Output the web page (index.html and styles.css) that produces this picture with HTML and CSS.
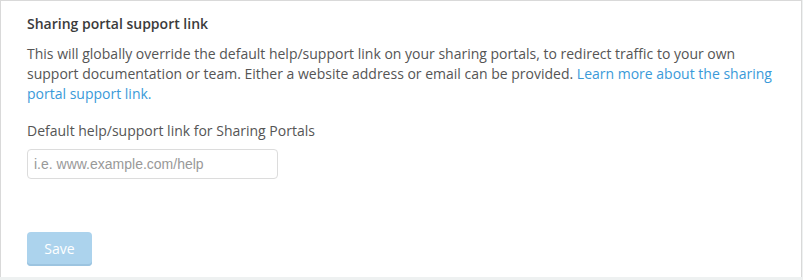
FILE: index.html
```html
<!DOCTYPE html>
<html lang="en">
<head>
<meta charset="utf-8">
<title>Sharing portal support link</title>
<link rel="stylesheet" href="styles.css">
</head>
<body>
<section class="panel">
  <h2 class="panel-title">Sharing portal support link</h2>
  <p class="panel-desc">This will globally override the default help/support link on your sharing portals, to redirect traffic to your own support documentation or team. Either a website address or email can be provided. <a href="#" class="link">Learn more about the sharing portal support link.</a></p>
  <label class="field-label" for="support-link">Default help/support link for Sharing Portals</label>
  <input class="field-input" id="support-link" type="text" placeholder="i.e. www.example.com/help">
  <div class="actions">
    <button class="btn-save" type="button" disabled>Save</button>
  </div>
</section>
</body>
</html>
```
FILE: styles.css
```css
html, body {
  margin: 0;
  padding: 0;
}
body {
  background: #eef1f1;
  font-family: "Open Sans", "Liberation Sans", sans-serif;
  font-size: 14px;
  color: #555;
  width: 803px;
  height: 280px;
  overflow: hidden;
}
.panel {
  box-sizing: border-box;
  width: 802px;
  height: 277px;
  background: #fff;
  border: 1px solid #d9d9d9;
  border-bottom: none;
  padding: 13px 26px 0 26px;
}
.panel-title {
  margin: 0;
  font-size: 14px;
  line-height: 20px;
  font-weight: 600;
  color: #3b3b3b;
}
.panel-desc {
  margin: 10px 0 17px;
  line-height: 20px;
  color: #555;
}
.link {
  color: #3a9ad9;
  text-decoration: none;
}
.field-label {
  display: block;
  line-height: 20px;
  margin-bottom: 8px;
  color: #555;
}
.field-input {
  display: block;
  box-sizing: border-box;
  width: 251px;
  height: 30px;
  margin: 0;
  border: 1px solid #dcdcdc;
  border-radius: 4px;
  padding: 0 6px;
  font-family: "Liberation Sans", Arial, sans-serif;
  font-size: 14px;
  color: #555;
  outline: none;
}
.field-input::placeholder {
  color: #999;
}
.actions {
  margin-top: 53px;
}
.btn-save {
  box-sizing: border-box;
  width: 65px;
  height: 34px;
  border: none;
  border-radius: 4px;
  background: #acd3ed;
  box-shadow: inset 0 -2px 0 #9cc4e0;
  color: #fff;
  font-family: "Open Sans", "Liberation Sans", sans-serif;
  font-size: 14px;
  padding: 0 0 2px;
  cursor: default;
}
```
